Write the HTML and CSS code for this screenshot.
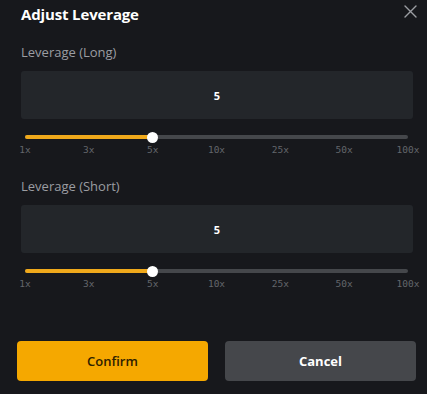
FILE: index.html
```html
<!DOCTYPE html>
<html>
<head>
<meta charset="utf-8">
<link rel="stylesheet" href="styles.css">
</head>
<body>
<div class="modal">
  <div class="header">
    <span class="title">Adjust Leverage</span>
    <svg class="close" width="13" height="13" viewBox="0 0 13 13"><path d="M1 1L12 12M12 1L1 12" stroke="#9c9ea3" stroke-width="1.4" stroke-linecap="round"/></svg>
  </div>

  <div class="section">
    <div class="label">Leverage (Long)</div>
    <div class="input">5</div>
    <div class="slider">
      <div class="track"><div class="fill" style="width:33.33%"></div><div class="thumb" style="left:33.33%"></div></div>
    </div>
    <div class="ticks">
      <span class="tick">1x</span><span class="tick">3x</span><span class="tick">5x</span><span class="tick">10x</span><span class="tick">25x</span><span class="tick">50x</span><span class="tick">100x</span>
    </div>
  </div>

  <div class="section">
    <div class="label">Leverage (Short)</div>
    <div class="input">5</div>
    <div class="slider">
      <div class="track"><div class="fill" style="width:33.33%"></div><div class="thumb" style="left:33.33%"></div></div>
    </div>
    <div class="ticks">
      <span class="tick">1x</span><span class="tick">3x</span><span class="tick">5x</span><span class="tick">10x</span><span class="tick">25x</span><span class="tick">50x</span><span class="tick">100x</span>
    </div>
  </div>

  <div class="actions">
    <button class="btn confirm">Confirm</button>
    <button class="btn cancel">Cancel</button>
  </div>
</div>
</body>
</html>
```

FILE: styles.css
```css
html, body {
  margin: 0;
  padding: 0;
  background: #17181c;
}
body {
  font-family: "Open Sans", "Noto Sans", sans-serif;
  width: 427px;
  height: 394px;
  overflow: hidden;
}
.modal {
  padding: 0 14px 0 21px;
}
.header {
  height: 28px;
  display: flex;
  align-items: center;
  justify-content: space-between;
}
.title {
  color: #ffffff;
  font-size: 15px;
  font-weight: 700;
  line-height: 28px;
  letter-spacing: -0.15px;
}
.close {
  margin-right: -4px;
  margin-top: -5px;
}
.section {
  padding-top: 15px;
  padding-bottom: 6px;
}
.label {
  color: #9b9da2;
  font-size: 13px;
  line-height: 18px;
  height: 18px;
}
.input {
  margin-top: 10px;
  height: 48px;
  background: #23262a;
  border-radius: 3px;
  display: flex;
  align-items: center;
  justify-content: center;
  color: #ffffff;
  font-size: 11px;
  font-weight: 700;
}
.slider {
  margin: 12px 5px 0 4px;
  height: 12px;
  display: flex;
  align-items: center;
}
.track {
  position: relative;
  flex: 1;
  height: 4px;
  border-radius: 2px;
  background: #45474b;
}
.fill {
  height: 4px;
  border-radius: 2px;
  background: #f0a91b;
}
.thumb {
  position: absolute;
  top: 50%;
  width: 11px;
  height: 11px;
  margin: -5.5px 0 0 -5.5px;
  border-radius: 50%;
  background: #ffffff;
}
.ticks {
  margin: 0 5px 0 4px;
  height: 13px;
  display: flex;
  justify-content: space-between;
}
.tick {
  width: 0;
  display: flex;
  justify-content: center;
  white-space: nowrap;
  font-family: "DejaVu Sans Mono", "Liberation Mono", monospace;
  font-size: 9.5px;
  line-height: 13px;
  color: #63666b;
}
.actions {
  margin: 45px -3px 0 -4px;
  display: flex;
  gap: 17px;
}
.btn {
  flex: 1;
  height: 40px;
  border: none;
  border-radius: 4px;
  font-family: "Open Sans", "Noto Sans", sans-serif;
  font-size: 13px;
  padding: 0;
}
.confirm {
  background: #f5a800;
  color: #2e2100;
  font-weight: 600;
}
.cancel {
  background: #45474b;
  color: #ffffff;
  font-weight: 700;
}
```
